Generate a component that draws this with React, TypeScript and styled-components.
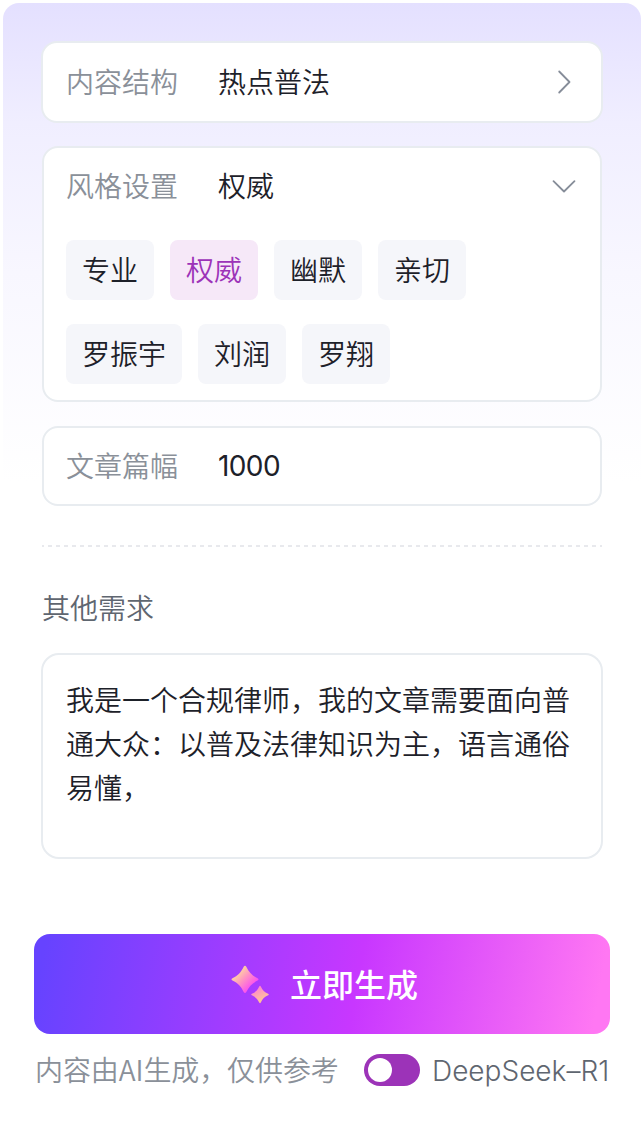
import React, { useState } from 'react';
import styled, { createGlobalStyle } from 'styled-components';

const GlobalStyle = createGlobalStyle`
  * { box-sizing: border-box; }
  body {
    margin: 0;
    background: #ffffff;
    font-family: "Noto Sans CJK SC", sans-serif;
    font-size: 28px;
    font-weight: 350;
    color: #1d2129;
  }
  button { font: inherit; color: inherit; border: 0; padding: 0; background: none; }
`;

const Page = styled.main`
  width: 643px;
  height: 1123px;
  padding: 3px 2px 0 3px;
  overflow: hidden;
`;

const Sheet = styled.div`
  height: 1120px;
  padding: 38px 31px 0;
  border-radius: 16px 16px 0 0;
  background: linear-gradient(180deg, #e4e0ff 0, #f0eeff 120px, #f8f7ff 270px, #ffffff 480px);
`;

const Form = styled.section`
  display: flex;
  flex-direction: column;
  gap: 24px;
  padding: 0 8px;
`;

const Card = styled.div<{ $height: number }>`
  height: ${(p) => p.$height}px;
  padding: 0 24px 0 22px;
  border: 2px solid #e8ecf0;
  border-radius: 16px;
  background: #ffffff;
`;

const LeadCard = styled(Card)`
  margin: 0 -1px -1px;
  padding: 0 25px 0 23px;
`;

const Row = styled.div`
  display: flex;
  align-items: center;
  height: 76px;
`;

const LeadRow = styled(Row)`
  height: 78px;
`;

const Label = styled.span`
  width: 152px;
  height: 40px;
  line-height: 39px;
  color: #8a9099;
`;

const Value = styled.span`
  flex: 1;
  height: 40px;
  line-height: 39px;
`;

const NumberValue = styled(Value)`
  font-family: Inter, sans-serif;
  font-weight: 400;
  line-height: 41px;
  letter-spacing: -0.6px;
`;

const Tags = styled.div`
  display: flex;
  flex-wrap: wrap;
  gap: 24px 16px;
  padding-top: 16px;
`;

const Tag = styled.button<{ $active?: boolean }>`
  height: 60px;
  padding: 0 16px 2px;
  border-radius: 8px;
  line-height: 58px;
  color: ${(p) => (p.$active ? '#9c33b8' : '#1d2129')};
  background: ${(p) => (p.$active ? '#f6e8f8' : '#f5f6fa')};
`;

const Divider = styled.div`
  height: 2px;
  margin: 39px 8px 0;
  background: repeating-linear-gradient(90deg, #e8e9ed 0 4px, transparent 4px 8px);
  background-position: -2px 0;
`;

const Heading = styled.h2`
  margin: 40px 8px 0;
  font-size: 28px;
  line-height: 40px;
  font-weight: 350;
  color: #5f6670;
`;

const Notes = styled.div`
  height: 206px;
  margin: 26px 7px 0;
  padding: 22px 24px 0 23px;
  border: 2px solid #e8ecf0;
  border-radius: 18px;
  background: #ffffff;
  line-height: 44px;
`;

const Submit = styled.button`
  display: flex;
  align-items: center;
  justify-content: center;
  gap: 20px;
  width: 576px;
  height: 100px;
  margin-top: 75px;
  padding-left: 4px;
  border-radius: 16px;
  color: #ffffff;
  font-size: 32px;
  font-weight: 500;
  background: linear-gradient(100deg, #6643ff 2%, #c837ff 56%, #ff77f3 97%);
`;

const SubmitText = styled.span`
  padding-bottom: 2px;
`;

const Footer = styled.footer`
  display: flex;
  align-items: center;
  height: 40px;
  margin-top: 16px;
  white-space: nowrap;
`;

const Disclaimer = styled.span`
  width: 330px;
  padding: 0 0 2px 1px;
  letter-spacing: -0.1px;
  color: #8a9099;
`;

const Switch = styled.button<{ $on: boolean }>`
  display: flex;
  align-items: center;
  justify-content: ${(p) => (p.$on ? 'flex-end' : 'flex-start')};
  width: 56px;
  height: 32px;
  padding: 0 4px;
  border-radius: 16px;
  background: #9c33b8;
`;

const Knob = styled.span`
  width: 24px;
  height: 24px;
  border-radius: 50%;
  background: #ffffff;
`;

const Model = styled.span`
  margin-left: 12px;
  padding-top: 1px;
  font-family: Inter, sans-serif;
  font-weight: 300;
  letter-spacing: 0;
  color: #5f6670;
`;

const Chevron = ({ down = false }: { down?: boolean }) => (
  <svg width="24" height="24" viewBox="0 0 24 24" fill="none" stroke="#868d99" strokeWidth="1.8" strokeLinecap="round" strokeLinejoin="round">
    <path d={down ? 'M1.5 7.2L12 17.5L22.5 7.2' : 'M7.2 1.5L17.5 12L7.2 22.5'} />
  </svg>
);

const Sparkles = () => (
  <svg width="40" height="40" viewBox="0 0 40 40">
    <defs>
      <linearGradient id="sparkLarge" x1="0.2" y1="0.2" x2="0.75" y2="0.75">
        <stop offset="0" stopColor="#ffdc9c" />
        <stop offset="0.5" stopColor="#ff92c3" />
        <stop offset="1" stopColor="#fb52ee" />
      </linearGradient>
      <linearGradient id="sparkSmall" x1="0.3" y1="0.15" x2="0.65" y2="0.85">
        <stop offset="0" stopColor="#ff86cf" />
        <stop offset="1" stopColor="#ffc497" />
      </linearGradient>
    </defs>
    <g transform="translate(0.5 1.2)">
      <path fill="url(#sparkLarge)" d="M13.2 1.5Q14.5 -0.5 15.8 1.5C18.5 7.2 21.8 10.4 27 13Q29 14.2 27 15.4C21.8 18 18.5 21.2 15.8 26.8Q14.5 29 13.2 26.8C10.5 21.2 7.2 18 2 15.4Q0 14.2 2 13C7.2 10.4 10.5 7.2 13.2 1.5Z" />
      <path fill="url(#sparkSmall)" d="M28.7 21.2Q29.5 19.8 30.3 21.2C32 25 34 26.9 37.6 28.5Q39 29.3 37.6 30.1C34 31.7 32 33.6 30.3 37.4Q29.5 38.8 28.7 37.4C27 33.6 25 31.7 21.4 30.1Q20 29.3 21.4 28.5C25 26.9 27 25 28.7 21.2Z" />
    </g>
  </svg>
);

const styles = ['专业', '权威', '幽默', '亲切', '罗振宇', '刘润', '罗翔'];

export default function App() {
  const [style, setStyle] = useState('权威');
  const [deep, setDeep] = useState(false);

  return (
    <>
      <GlobalStyle />
      <Page>
        <Sheet>
          <Form>
            <LeadCard $height={82}>
              <LeadRow>
                <Label>内容结构</Label>
                <Value>热点普法</Value>
                <Chevron />
              </LeadRow>
            </LeadCard>
            <Card $height={256}>
              <Row>
                <Label>风格设置</Label>
                <Value>{style}</Value>
                <Chevron down />
              </Row>
              <Tags>
                {styles.map((name) => (
                  <Tag key={name} $active={name === style} onClick={() => setStyle(name)}>
                    {name}
                  </Tag>
                ))}
              </Tags>
            </Card>
            <Card $height={80}>
              <Row>
                <Label>文章篇幅</Label>
                <NumberValue>1000</NumberValue>
              </Row>
            </Card>
          </Form>
          <Divider />
          <Heading>其他需求</Heading>
          <Notes>我是一个合规律师，我的文章需要面向普通大众：以普及法律知识为主，语言通俗易懂，</Notes>
          <Submit>
            <Sparkles />
            <SubmitText>立即生成</SubmitText>
          </Submit>
          <Footer>
            <Disclaimer>内容由AI生成，仅供参考</Disclaimer>
            <Switch $on={deep} onClick={() => setDeep(!deep)} aria-label="DeepSeek–R1">
              <Knob />
            </Switch>
            <Model>DeepSeek–R1</Model>
          </Footer>
        </Sheet>
      </Page>
    </>
  );
}
